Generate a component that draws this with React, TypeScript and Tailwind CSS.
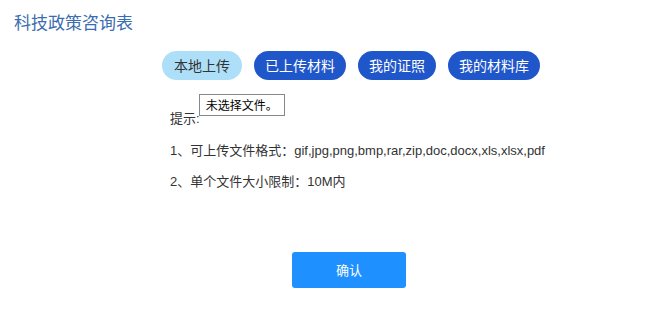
import React from "react";

const font = { fontFamily: '"Noto Sans CJK SC", "Noto Sans", sans-serif' };
const mixed = { fontFamily: '"Liberation Sans", "Noto Sans CJK SC", sans-serif' };

export default function App() {
  const tabs = ["已上传材料", "我的证照", "我的材料库"];
  return (
    <div className="w-[657px] h-[321px] bg-white relative" style={font}>
      {/* Title */}
      <div className="pl-[14px] pt-[9px] text-[17px] leading-[26px] text-[#3a6db0]">科技政策咨询表</div>

      {/* Tabs */}
      <div className="flex gap-[12px] ml-[162px] mt-[16px]">
        <div className="h-[29px] px-[12px] rounded-full bg-[#ade0f8] text-[#333] text-[14px] leading-[29px]">本地上传</div>
        {tabs.map((t) => (
          <div key={t} className="h-[29px] px-[11px] rounded-full bg-[#1f56c9] text-white text-[14px] leading-[29px]">
            {t}
          </div>
        ))}
      </div>

      {/* Hint */}
      <div className="ml-[170px] mt-[14px] text-[13px] text-[#333]" style={mixed}>
        <div className="flex items-end h-[34px]">
          <span className="leading-[18px]">提示:</span>
          <span className="self-start ml-[-1px] h-[22px] px-[6px] border border-[#888] text-[12px] leading-[20px] text-black" style={font}>未选择文件。</span>
        </div>
        <div className="mt-[13px] leading-[20px]">1、可上传文件格式：gif,jpg,png,bmp,rar,zip,doc,docx,xls,xlsx,pdf</div>
        <div className="mt-[11px] leading-[20px]">2、单个文件大小限制：10M内</div>
      </div>

      {/* Confirm */}
      <div className="flex justify-center ml-[41px] mt-[60px]">
        <button className="w-[114px] h-[36px] rounded-[3px] bg-[#1e90ff] text-white text-[13px]">确认</button>
      </div>
    </div>
  );
}
